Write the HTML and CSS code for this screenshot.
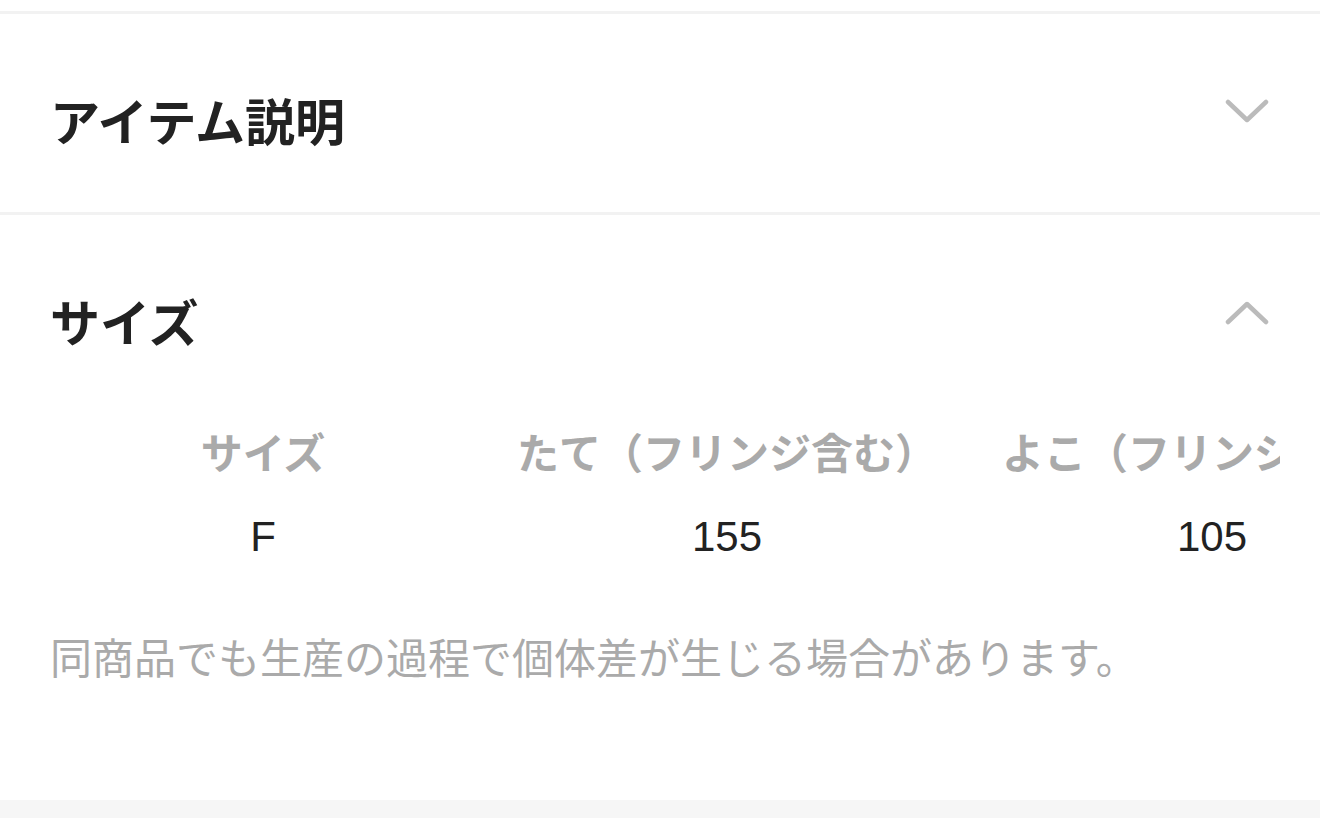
FILE: index.html
```html
<!DOCTYPE html>
<html lang="ja">
<head>
    <meta charset="UTF-8">
    <meta name="viewport" content="width=device-width, initial-scale=1.0">
    <title>商品詳細</title>
    <link rel="stylesheet" href="styles.css">
</head>
<body>
    <div class="rule"></div>

    <section class="panel">
        <div class="panel-head">
            <h2>アイテム説明</h2>
            <svg class="chevron" width="44" height="26" viewBox="0 0 44 26">
                <path d="M3 3 L22 21 L41 3" />
            </svg>
        </div>
    </section>

    <div class="rule"></div>

    <section class="panel open">
        <div class="panel-head">
            <h2>サイズ</h2>
            <svg class="chevron" width="44" height="26" viewBox="0 0 44 26">
                <path d="M3 22 L22 4 L41 22" />
            </svg>
        </div>

        <div class="size-table">
            <div class="size-grid">
                <div class="th">サイズ</div>
                <div class="th">たて（フリンジ含む）</div>
                <div class="th">よこ（フリンジ含む）</div>
                <div class="td">F</div>
                <div class="td">155</div>
                <div class="td">105</div>
            </div>
        </div>

        <p class="note">同商品でも生産の過程で個体差が生じる場合があります。</p>
    </section>

    <div class="band"></div>
</body>
</html>
```

FILE: styles.css
```css
body {
    margin: 0;
    background-color: #fff;
    font-family: "Liberation Sans", "Noto Sans CJK JP", sans-serif;
    color: #222;
}
.rule {
    height: 3px;
    background-color: #f2f2f2;
}
body > .rule:first-child {
    margin-top: 11px;
}
.panel {
    padding: 0 51px 58px 50px;
}
.panel-head {
    display: flex;
    justify-content: space-between;
    align-items: flex-start;
    padding-top: 80px;
}
.panel-head h2 {
    margin: 0;
    font-size: 50px;
    line-height: 60px;
    font-weight: 700;
    color: #222;
}
.chevron {
    margin-top: 5px;
}
.chevron path {
    fill: none;
    stroke: #bbb;
    stroke-width: 4.5;
    stroke-linecap: round;
    stroke-linejoin: round;
}
.open {
    padding-bottom: 110px;
}
.size-table {
    margin-top: 70px;
    width: 1230px;
    overflow: hidden;
}
.size-grid {
    display: grid;
    grid-template-columns: 426px 502px 468px;
    row-gap: 22px;
    white-space: nowrap;
}
.th,
.td {
    text-align: center;
    line-height: 60px;
    font-size: 42px;
}
.th {
    font-weight: 700;
    color: #aaa;
}
.td {
    color: #222;
}
.note {
    margin: 63px 0 0;
    font-size: 42px;
    line-height: 60px;
    color: #aaa;
}
.band {
    height: 18px;
    background-color: #f6f6f6;
}
```
